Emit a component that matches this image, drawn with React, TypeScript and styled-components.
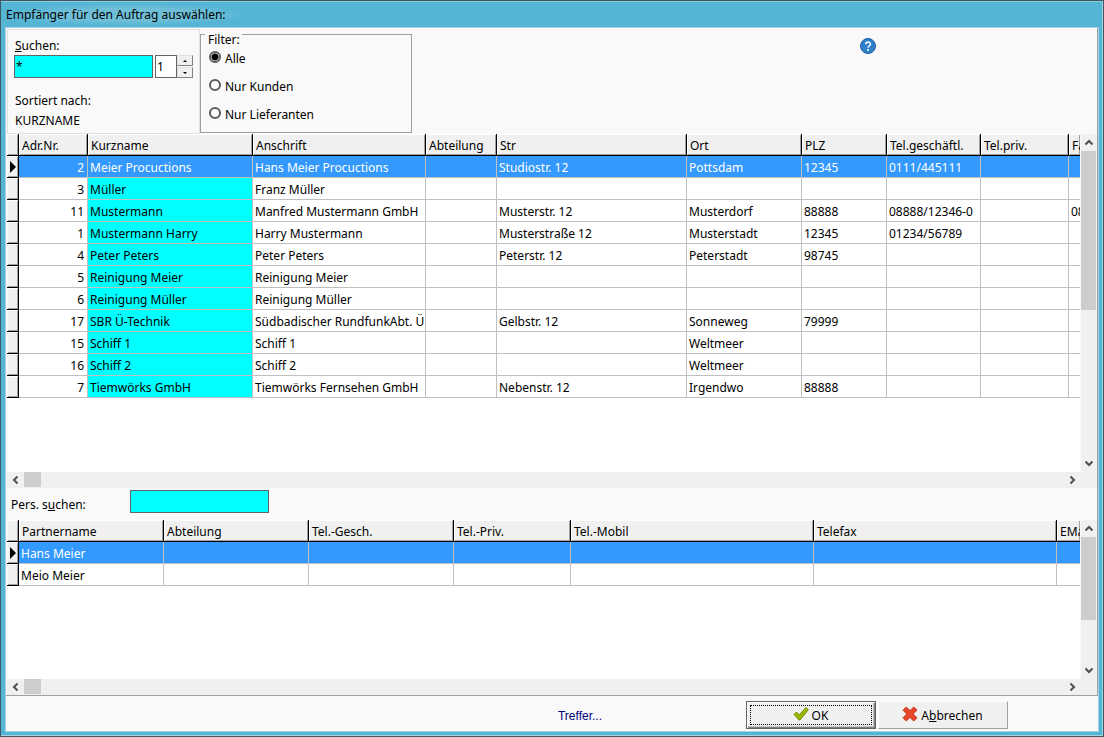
import React from "react";
import styled, { createGlobalStyle, css } from "styled-components";

const GlobalStyle = createGlobalStyle`
  *, *::before, *::after { box-sizing: border-box; }
  body {
    margin: 0;
    background: #55b5d4;
    font: 12px/18px "Noto Sans", "Open Sans", sans-serif;
    color: #000;
  }
  button, input { font: inherit; color: inherit; }
`;

const Window = styled.div`
  display: flex;
  flex-direction: column;
  min-height: 100vh;
  padding: 0 4px 4px;
  border: 1px solid #3f5963;
  background: #55b5d4;
  box-shadow: inset 0 1px #8fcbdd, inset -1px -1px #a5d2e0;
`;

const TitleBar = styled.header`
  display: flex;
  align-items: center;
  height: 26px;
`;

const Title = styled.h1`
  margin: 0;
  padding: 1px 24px 0 1px;
  font-size: 12px;
  line-height: 20px;
  font-weight: 400;
  background: radial-gradient(closest-side, #6fbfd9 60%, #55b5d4);
`;

const Client = styled.main`
  display: flex;
  flex-direction: column;
  flex: 1;
  min-width: 0;
  border: 1px solid #a5d2e0;
  background: #f9f9f9;
`;

const Content = styled.div`
  display: flex;
  flex-direction: column;
  flex: 1;
  padding-left: 1px;
  border-right: 1px solid #a0a0a0;
  border-bottom: 1px solid #a0a0a0;
`;

const Toolbar = styled.div`
  display: flex;
  align-items: flex-start;
  height: 106px;
  border-top: 1px solid #fff;
`;

const SearchPanel = styled.form`
  width: 193px;
  height: 105px;
  padding: 7px 6px 0;
  border: 1px solid #e0e0e0;
`;

const Label = styled.label`
  display: block;
  padding-left: 1px;
`;

const Line = styled.p`
  margin: 0;
  padding: 1px;
`;

const SearchRow = styled.div`
  display: flex;
  gap: 2px;
  margin-bottom: 13px;
`;

const SearchField = styled.input`
  width: 139px;
  height: 23px;
  padding: 0 1px;
  border: 1px solid #646464;
  border-radius: 0;
  outline: none;
  background: #0ff;
`;

const Spinner = styled.div`
  display: flex;
`;

const SpinField = styled.input`
  width: 22px;
  height: 23px;
  padding: 0 1px;
  border: 1px solid #646464;
  border-radius: 0;
  outline: none;
  background: #fff;
`;

const SpinButtons = styled.div`
  display: flex;
  flex-direction: column;
  gap: 1px;
`;

const raised = css`
  border: 1px solid;
  border-color: #fff #a0a0a0 #a0a0a0 #fff;
  border-radius: 0;
  background: #f0f0f0;
`;

const SpinButton = styled.button`
  ${raised}
  display: grid;
  place-items: center;
  width: 16px;
  height: 11px;
  padding: 0;
  border-color: #e0e0e0 #808080 #808080 #e0e0e0;
`;

const Filter = styled.fieldset`
  width: 212px;
  height: 99px;
  margin: 5px 0 0;
  padding: 0 8px;
  border: 1px solid #a0a0a0;
`;

const FilterTitle = styled.legend`
  float: left;
  margin: -4px 0 1px -4px;
  padding: 0 2px 0 3px;
  background: #f9f9f9;
`;

const Options = styled.div`
  display: flex;
  flex-direction: column;
  gap: 10px;
  clear: both;
`;

const Option = styled.label`
  display: flex;
  align-items: center;
  gap: 4px;
`;

const Radio = styled.input`
  appearance: none;
  width: 12px;
  height: 12px;
  margin: 0 0 4px;
  border: 2px solid #5c5c5c;
  border-radius: 50%;
  background: #fff;
  &:checked { background: radial-gradient(circle, #000 3px, #fff 4px); }
`;

const HelpButton = styled.button`
  width: 16px;
  height: 16px;
  margin: 9px 221px 0 auto;
  padding: 0;
  border: 0;
  background: none;
  svg { display: block; }
`;

const GridPanel = styled.section<{ $height?: number }>`
  display: grid;
  grid-template-columns: minmax(0, 1fr) 16px;
  grid-template-rows: 1fr 16px;
  ${(p) => (p.$height ? `min-height: ${p.$height}px;` : "flex: 1;")}
  background: #f0f0f0;
`;

const Viewport = styled.div`
  overflow: hidden;
  background: #fff;
  border-right: 1px solid #f9f9f9;
`;

const Table = styled.table`
  width: 100%;
  table-layout: fixed;
  border-collapse: separate;
  border-spacing: 0;
`;

const HeadCell = styled.th`
  height: 22px;
  padding: 3px 0 0 3px;
  overflow: hidden;
  border-right: 1px solid #000;
  border-bottom: 1px solid #000;
  background: #f0f0f0;
  box-shadow: inset 1px 1px #fff, inset -1px -1px #a0a0a0;
  font-weight: 400;
  line-height: 18px;
  text-align: left;
  white-space: nowrap;
  &:last-child { border-right: 0; }
`;

const Row = styled.tr<{ $selected?: boolean }>`
  background: ${(p) => (p.$selected ? "#3399ff" : "#fff")};
  color: ${(p) => (p.$selected ? "#fff" : "#000")};
`;

const Cell = styled.td<{ $right?: boolean; $key?: boolean }>`
  height: 22px;
  padding: 3px 3px 0 2px;
  overflow: hidden;
  border-right: 1px solid #c0c0c0;
  border-bottom: 1px solid #c0c0c0;
  line-height: 18px;
  text-align: ${(p) => (p.$right ? "right" : "left")};
  white-space: nowrap;
  ${(p) => p.$key && "background: #0ff;"}
  &:nth-child(n + 3) { padding-right: 0; }
  &:last-child { border-right: 0; }
`;

const Marker = styled.td`
  height: 22px;
  padding: 0 0 0 3px;
  border-right: 1px solid #000;
  border-bottom: 1px solid #000;
  background: #f0f0f0;
  box-shadow: inset 1px 1px #fff, inset -1px -1px #a0a0a0;
  svg { display: block; }
`;

const ScrollBar = styled.div<{ $vertical?: boolean }>`
  display: flex;
  flex-direction: ${(p) => (p.$vertical ? "column" : "row")};
  background: #f0f0f0;
`;

const ScrollArrow = styled.button`
  display: grid;
  place-items: center;
  flex: none;
  min-width: 16px;
  min-height: 16px;
  padding: 0;
  border: 0;
  background: none;
`;

const Track = styled.div<{ $vertical?: boolean }>`
  flex: 1;
  padding: ${(p) => (p.$vertical ? "1px 1px 0 0" : "0 0 1px 1px")};
`;

const Thumb = styled.div<{ $vertical?: boolean; $length: number }>`
  width: ${(p) => (p.$vertical ? "100%" : `${p.$length}px`)};
  height: ${(p) => (p.$vertical ? `${p.$length}px` : "100%")};
  background: #cdcdcd;
`;

const PersonSearch = styled.form`
  display: flex;
  align-items: flex-start;
  height: 32px;
  padding: 2px 4px 0;
`;

const PersonLabel = styled.label`
  width: 119px;
  padding-top: 6px;
`;

const Footer = styled.footer`
  display: flex;
  align-items: center;
  justify-content: flex-end;
  gap: 2px;
  height: 35px;
  padding: 2px 90px 0 0;
`;

const Hits = styled.output`
  margin-right: 142px;
  padding-top: 2px;
  color: #000080;
  font: 12px/18px "Liberation Sans", Arial, sans-serif;
`;

const Button = styled.button<{ $primary?: boolean }>`
  ${raised}
  display: flex;
  align-items: center;
  justify-content: center;
  gap: 3px;
  width: 130px;
  height: 28px;
  padding: 2px 1px 0 0;
  svg { margin-bottom: 3px; }
  ${(p) =>
    p.$primary &&
    css`
      border-color: #646464;
      box-shadow: inset 1px 1px #fff, inset -1px -1px #808080, inset -2px -2px #c0c0c0;
      outline: 1px dotted #000;
      outline-offset: -5px;
    `}
`;

type Direction = "up" | "down" | "left" | "right";

const turns: Record<Direction, number> = { up: 0, right: 90, down: 180, left: 270 };

const Arrow = ({ to, label }: { to: Direction; label: string }) => (
  <ScrollArrow type="button" aria-label={label}>
    <svg width="10" height="10" viewBox="0 0 10 10">
      <path
        d="M1.5 7.5 5 4 8.5 7.5"
        fill="none"
        stroke="#505050"
        strokeWidth="2"
        transform={`rotate(${turns[to]} 5 5)`}
      />
    </svg>
  </ScrollArrow>
);

interface GridProps {
  name: string;
  columns: { title: string; width?: number }[];
  rows: string[][];
  thumb: number;
  numbered?: boolean;
  height?: number;
}

const DataGrid = ({ name, columns, rows, thumb, numbered, height }: GridProps) => (
  <GridPanel $height={height} aria-label={name}>
    <Viewport>
      <Table>
        <colgroup>
          <col width={12} />
          {columns.map((c) => (
            <col key={c.title} width={c.width} />
          ))}
        </colgroup>
        <thead>
          <tr>
            <HeadCell aria-label="Aktuelle Zeile" />
            {columns.map((c) => (
              <HeadCell key={c.title} scope="col">{c.title}</HeadCell>
            ))}
          </tr>
        </thead>
        <tbody>
          {rows.map((row, i) => (
            <Row key={i} $selected={i === 0}>
              <Marker>
                {i === 0 && (
                  <svg width="6" height="12" viewBox="0 0 6 12">
                    <path d="M0 0 6 6 0 12Z" fill="#000" />
                  </svg>
                )}
              </Marker>
              {columns.map((c, j) => (
                <Cell key={c.title} $right={numbered && j === 0} $key={numbered && j === 1 && i > 0}>
                  {row[j]}
                </Cell>
              ))}
            </Row>
          ))}
        </tbody>
      </Table>
    </Viewport>
    <ScrollBar $vertical>
      <Arrow to="up" label="Nach oben" />
      <Track $vertical>
        <Thumb $vertical $length={thumb} />
      </Track>
      <Arrow to="down" label="Nach unten" />
    </ScrollBar>
    <ScrollBar>
      <Arrow to="left" label="Nach links" />
      <Track>
        <Thumb $length={17} />
      </Track>
      <Arrow to="right" label="Nach rechts" />
    </ScrollBar>
  </GridPanel>
);

const addressColumns = [
  { title: "Adr.Nr.", width: 69 },
  { title: "Kurzname", width: 165 },
  { title: "Anschrift", width: 173 },
  { title: "Abteilung", width: 71 },
  { title: "Str", width: 190 },
  { title: "Ort", width: 115 },
  { title: "PLZ", width: 85 },
  { title: "Tel.geschäftl.", width: 94 },
  { title: "Tel.priv.", width: 88 },
  { title: "Fax" },
];

const addresses = [
  ["2", "Meier Procuctions", "Hans Meier Procuctions", "", "Studiostr. 12", "Pottsdam", "12345", "0111/445111"],
  ["3", "Müller", "Franz Müller"],
  ["11", "Mustermann", "Manfred Mustermann GmbH", "", "Musterstr. 12", "Musterdorf", "88888", "08888/12346-0", "", "088"],
  ["1", "Mustermann Harry", "Harry Mustermann", "", "Musterstraße 12", "Musterstadt", "12345", "01234/56789"],
  ["4", "Peter Peters", "Peter Peters", "", "Peterstr. 12", "Peterstadt", "98745"],
  ["5", "Reinigung Meier", "Reinigung Meier"],
  ["6", "Reinigung Müller", "Reinigung Müller"],
  ["17", "SBR Ü-Technik", "Südbadischer RundfunkAbt. Ü", "", "Gelbstr. 12", "Sonneweg", "79999"],
  ["15", "Schiff 1", "Schiff 1", "", "", "Weltmeer"],
  ["16", "Schiff 2", "Schiff 2", "", "", "Weltmeer"],
  ["7", "Tiemwörks GmbH", "Tiemwörks Fernsehen GmbH", "", "Nebenstr. 12", "Irgendwo", "88888"],
];

const personColumns = [
  { title: "Partnername", width: 145 },
  { title: "Abteilung", width: 145 },
  { title: "Tel.-Gesch.", width: 145 },
  { title: "Tel.-Priv.", width: 117 },
  { title: "Tel.-Mobil", width: 243 },
  { title: "Telefax", width: 243 },
  { title: "EMail" },
];

const persons = [["Hans Meier"], ["Meio Meier"]];

export default function App() {
  return (
    <>
      <GlobalStyle />
      <Window>
        <TitleBar>
          <Title>Empfänger für den Auftrag auswählen:</Title>
        </TitleBar>
        <Client>
          <Content>
            <Toolbar>
              <SearchPanel>
                <Label htmlFor="search"><u>S</u>uchen:</Label>
                <SearchRow>
                  <SearchField id="search" defaultValue="*" />
                  <Spinner>
                    <SpinField aria-label="Suchfeld Nummer" defaultValue="1" />
                    <SpinButtons>
                      <SpinButton type="button" aria-label="Erhöhen">
                        <svg width="4" height="2" viewBox="0 0 4 2"><path d="M0 2 2 0 4 2Z" /></svg>
                      </SpinButton>
                      <SpinButton type="button" aria-label="Verringern">
                        <svg width="4" height="2" viewBox="0 0 4 2"><path d="M0 0 2 2 4 0Z" /></svg>
                      </SpinButton>
                    </SpinButtons>
                  </Spinner>
                </SearchRow>
                <Line>Sortiert nach:</Line>
                <Line>KURZNAME</Line>
              </SearchPanel>
              <Filter>
                <FilterTitle>Filter:</FilterTitle>
                <Options>
                  <Option><Radio type="radio" name="filter" defaultChecked />Alle</Option>
                  <Option><Radio type="radio" name="filter" />Nur Kunden</Option>
                  <Option><Radio type="radio" name="filter" />Nur Lieferanten</Option>
                </Options>
              </Filter>
              <HelpButton type="button" aria-label="Hilfe">
                <svg width="16" height="16" viewBox="0 0 16 16">
                  <circle cx="8" cy="8" r="7.5" fill="#2f7fcb" stroke="#1c5fa8" />
                  <path d="M5.7 6.2C5.7 3.2 10.4 3.3 10.4 6 10.4 7.7 8.1 7.8 8.1 9.8" fill="none" stroke="#fff" strokeWidth="1.5" />
                  <rect x="7.2" y="11" width="1.8" height="1.8" fill="#fff" />
                </svg>
              </HelpButton>
            </Toolbar>
            <DataGrid name="Adressen" columns={addressColumns} rows={addresses} thumb={159} numbered />
            <PersonSearch>
              <PersonLabel htmlFor="person">Pers. s<u>u</u>chen:</PersonLabel>
              <SearchField id="person" />
            </PersonSearch>
            <DataGrid name="Ansprechpartner" columns={personColumns} rows={persons} thumb={83} height={175} />
          </Content>
          <Footer>
            <Hits>Treffer...</Hits>
            <Button type="button" $primary>
              <svg width="16" height="16" viewBox="0 0 16 16">
                <path d="M1 8.5 3.5 6 6.3 8.8 13 1.5 15.3 3.8 7 14H6Z" fill="#9ab800" stroke="#6f8f00" strokeLinejoin="round" />
              </svg>
              OK
            </Button>
            <Button type="button">
              <svg width="16" height="16" viewBox="0 0 16 16">
                <path d="M4.2 1 8 4.6 11.8 1 15 4.2 11.2 8 15 11.8 11.8 15 8 11.4 4.2 15 1 11.8 4.8 8 1 4.2Z" fill="#e8472b" stroke="#c93a22" strokeLinejoin="round" />
              </svg>
              <span>A<u>b</u>brechen</span>
            </Button>
          </Footer>
        </Client>
      </Window>
    </>
  );
}
